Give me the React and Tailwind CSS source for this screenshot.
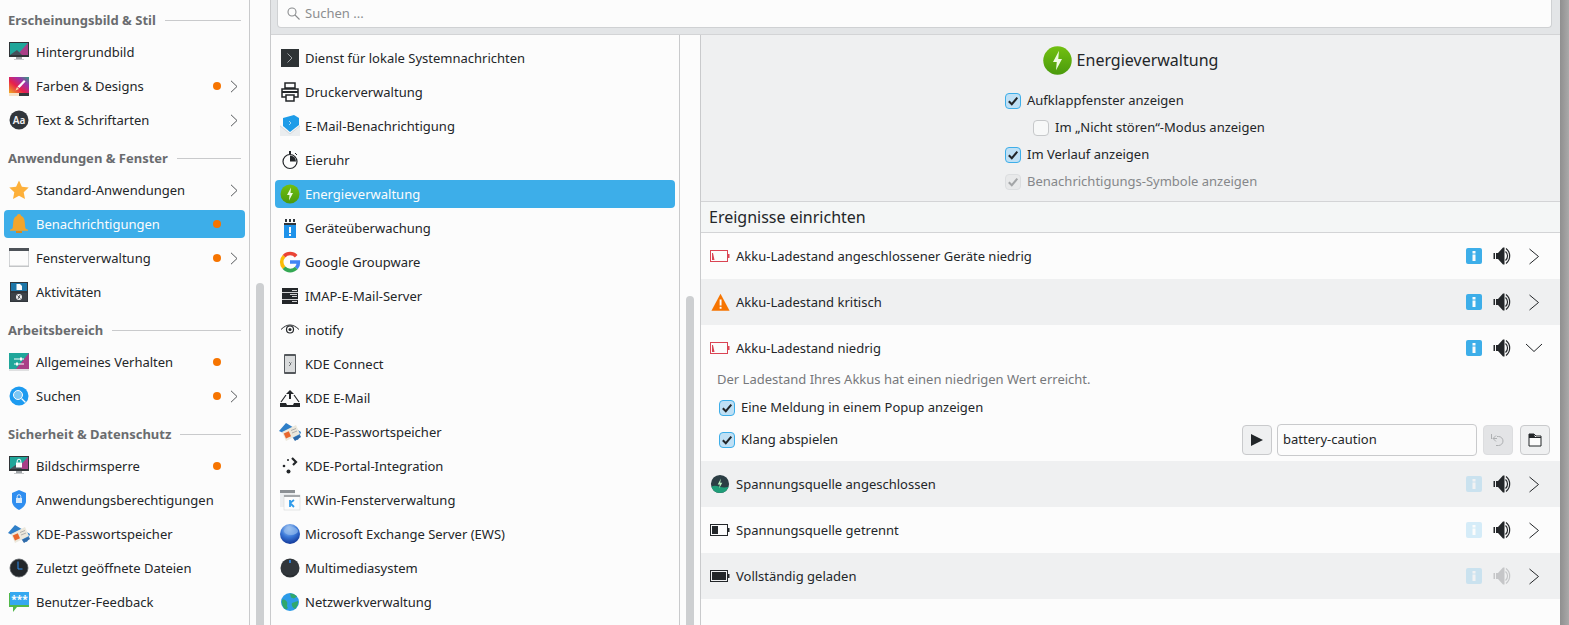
const Svg = ({ size = 22, children, className = '' }) => (
  <svg width={size} height={size} viewBox="0 0 22 22" className={`shrink-0 ${className}`}>
    {children}
  </svg>
)

/* ---------- sidebar icons ---------- */
const MonitorBase = ({ children }) => (
  <Svg>
    <rect x="1" y="1" width="20" height="15" fill="#2f3437" />
    <path d="M2 2h18v12H2z" fill="#1fa69a" />
    <path d="M20 2v12H9z" fill="#a93f87" />
    <path d="M2 14l7-5 5 5z" fill="#45505a" />
    {children}
    <rect x="8" y="16" width="6" height="2" fill="#9fa3a6" />
    <rect x="6" y="18" width="10" height="1" fill="#c8cacc" />
  </Svg>
)
const Wallpaper = () => <MonitorBase />
const Colors = () => (
  <Svg>
    <defs>
      <linearGradient id="cg" x1="0" y1="1" x2="1" y2="0">
        <stop offset="0" stopColor="#f0b020" />
        <stop offset="0.4" stopColor="#e8204a" />
        <stop offset="0.7" stopColor="#a030a8" />
        <stop offset="1" stopColor="#30a080" />
      </linearGradient>
    </defs>
    <rect x="1" y="2" width="20" height="16" fill="url(#cg)" />
    <rect x="1" y="18" width="10" height="3" fill="#f7e3c8" />
    <rect x="11" y="18" width="10" height="3" fill="#33393d" />
    <path d="M16 5l1.500 1.500-6 6.500-2-1.500z" fill="#fcfcfc" />
    <path d="M9 12l2 2-3.500 1.500z" fill="#f4d6a0" />
  </Svg>
)
const TextIcon = () => (
  <Svg>
    <circle cx="11" cy="11" r="9.500" fill="#31363b" />
    <text x="11" y="14.500" textAnchor="middle" fontSize="10" fontWeight="600" fill="#eff0f1" fontFamily="Noto Sans, sans-serif">Aa</text>
  </Svg>
)
const Star = () => (
  <Svg>
    <path d="M11 1.500l2.900 6.300 6.800.8-5 4.700 1.300 6.800L11 16.700l-6 3.400 1.300-6.800-5-4.700 6.800-.8z" fill="#fdb03a" />
  </Svg>
)
const Bell = () => (
  <Svg>
    <path d="M11 1c1.200 0 2 .8 2 1.800 2.500.9 3.500 3 3.700 6l.6 6c.3 1 1.200 1.500 2.700 2v1H2v-1c1.500-.5 2.400-1 2.700-2l.6-6c.2-3 1.200-5.100 3.700-6C9 1.800 9.800 1 11 1z" fill="#f2a52c" />
    <rect x="8" y="18" width="6" height="2" fill="#d98a1c" />
  </Svg>
)
const WindowIcon = () => (
  <Svg>
    <rect x="1.500" y="1.500" width="19" height="18" fill="#fcfcfc" stroke="#d2d4d6" strokeWidth="1" />
    <rect x="1" y="1" width="20" height="3" fill="#4d5258" />
    <rect x="1" y="18.500" width="20" height="1.500" fill="#c3c5c7" />
  </Svg>
)
const Activities = () => (
  <Svg>
    <rect x="2" y="1" width="18" height="20" fill="#31363b" />
    <rect x="3" y="2" width="16" height="8" fill="#1d76a8" />
    <path d="M8.500 3h3.500l2 2v4H8.500z" fill="#fcfcfc" />
    <rect x="3" y="12" width="16" height="8" fill="#3c4248" />
    <circle cx="11" cy="16" r="3" fill="#eff0f1" />
    <path d="M9.500 14.500l3 3M12 14l-2 4" stroke="#31363b" strokeWidth="0.800" />
  </Svg>
)
const General = () => (
  <Svg>
    <rect x="1" y="2" width="20" height="16" fill="#1fa69a" />
    <path d="M21 2v16H8z" fill="#a93f87" />
    <rect x="1" y="18" width="20" height="2" fill="#dfe0e1" />
    <path d="M6 8h10M6 13h10" stroke="#fcfcfc" strokeWidth="1" />
    <rect x="12" y="6.500" width="2" height="3" fill="#fcfcfc" />
    <rect x="8" y="11.500" width="2" height="3" fill="#fcfcfc" />
  </Svg>
)
const SearchBlue = () => (
  <Svg>
    <circle cx="11" cy="11" r="9.500" fill="#1d9bf0" />
    <circle cx="10" cy="10" r="4.500" fill="#7cc7f5" stroke="#fcfcfc" strokeWidth="1" />
    <path d="M13.500 13.500l4 4" stroke="#fcfcfc" strokeWidth="1.300" />
  </Svg>
)
const LockMonitor = () => (
  <MonitorBase>
    <rect x="8" y="7.500" width="6" height="5" fill="#fcfcfc" />
    <path d="M9.200 7.500V6a1.800 1.800 0 013.600 0v1.500" fill="none" stroke="#fcfcfc" strokeWidth="1" />
  </MonitorBase>
)
const Shield = () => (
  <Svg>
    <path d="M11 1l7 3v8c0 4-3 7-7 9-4-2-7-5-7-9V4z" fill="#2f8ef0" />
    <rect x="8" y="9" width="6" height="5" fill="#d6e9fb" />
    <path d="M9.200 9V7.500a1.800 1.800 0 013.600 0V9" fill="none" stroke="#d6e9fb" strokeWidth="1" />
  </Svg>
)
const Wallet = () => (
  <Svg>
    <path d="M0 10L7 2l15 9-3 8z" fill="#2f7fc8" />
    <path d="M3 11l14-7 4 9-14 7z" fill="#ece8dc" />
    <rect x="5.500" y="11" width="5.500" height="5.500" fill="#e8672c" transform="rotate(-24 8.500 13.500)" />
    <path d="M12 9.500l5-2M13 12l5-2" stroke="#a0a0a0" strokeWidth="0.800" />
    <path d="M16 20l6-4-1-2-7 3z" fill="#2f6aa8" />
  </Svg>
)
const ClockIcon = () => (
  <Svg>
    <circle cx="11" cy="11" r="9" fill="#23272b" stroke="#5d6266" strokeWidth="0.800" />
    <path d="M10 4.500v7.500h4.500" fill="none" stroke="#2f8ef0" strokeWidth="1" />
  </Svg>
)
const Feedback = () => (
  <Svg>
    <path d="M1 2h20v14H9l-4 5v-5H1z" fill="#53b84a" />
    <rect x="2" y="1" width="19" height="13" fill="#35a8f0" />
    <text x="11.500" y="12" textAnchor="middle" fontSize="10" fontWeight="700" fill="#fcfcfc" fontFamily="Noto Sans, sans-serif">***</text>
  </Svg>
)

/* ---------- list icons ---------- */
const Terminal = () => (
  <Svg>
    <rect x="2" y="2" width="18" height="18" fill="#2e3335" />
    <path d="M8.500 6.500l4.500 4.500-4.500 4.500" fill="none" stroke="#9fa3a6" strokeWidth="1" />
  </Svg>
)
const Printer = () => (
  <Svg>
    <path d="M6 2h10v5H6zM3 8h16v8H3z" fill="none" stroke="#232629" strokeWidth="1.500" />
    <rect x="3" y="10" width="16" height="2" fill="#232629" />
    <rect x="7" y="14" width="8" height="6" fill="#fcfcfc" stroke="#232629" strokeWidth="1.500" />
  </Svg>
)
const MailNotify = () => (
  <Svg>
    <path d="M1 10l10 8 10-8v11H1z" fill="#eaedef" />
    <path d="M4 3l11-3 5 3v7l-9 7-7-6z" fill="#1e9ce8" />
    <path d="M1 11l10 8 10-8" fill="none" stroke="#d8dbdd" strokeWidth="1" />
    <path d="M10 6l2 2-2 2" fill="none" stroke="#9bd6f8" strokeWidth="1" />
  </Svg>
)
const Timer = () => (
  <Svg>
    <circle cx="11" cy="12.500" r="7" fill="#fcfcfc" stroke="#232629" strokeWidth="1.200" />
    <path d="M11 12.500V6.500a6 6 0 016 6z" fill="#232629" />
    <rect x="10" y="2" width="2" height="3" fill="#232629" />
    <path d="M16 4l2 2" stroke="#232629" strokeWidth="1" />
  </Svg>
)
const Power = ({ size = 22 }) => (
  <Svg size={size}>
    <defs>
      <linearGradient id="pg" x1="0" y1="0" x2="0" y2="1">
        <stop offset="0" stopColor="#72c011" />
        <stop offset="1" stopColor="#4a9a0c" />
      </linearGradient>
    </defs>
    <circle cx="11" cy="11" r="9.500" fill="url(#pg)" />
    <path d="M12 4.500L8 12h2.500L10 17.500l4-7.500h-2.500z" fill="#eefbe0" />
  </Svg>
)
const Usb = () => (
  <Svg>
    <rect x="6" y="2" width="2" height="3" fill="#31363b" />
    <rect x="10" y="2" width="2" height="3" fill="#31363b" />
    <rect x="14" y="2" width="2" height="3" fill="#31363b" />
    <rect x="5" y="6" width="12" height="2" fill="#31363b" />
    <rect x="5" y="8" width="12" height="13" fill="#1e92ea" />
    <rect x="10" y="10" width="2" height="6" fill="#fcfcfc" />
    <rect x="10" y="17" width="2" height="2" fill="#fcfcfc" />
  </Svg>
)
const Google = () => (
  <Svg>
    <g fill="none" strokeWidth="3.600">
      <path d="M17.200 5.200A8.400 8.400 0 005 5.200" stroke="#ea4335" />
      <path d="M5 5.200a8.400 8.400 0 000 11.600" stroke="#fbbc05" />
      <path d="M5 16.800a8.400 8.400 0 0012.300.2" stroke="#34a853" />
      <path d="M17.300 17a8.400 8.400 0 002.100-6H11" stroke="#4285f4" />
    </g>
  </Svg>
)
const Server = () => (
  <Svg>
    <rect x="3" y="3" width="16" height="16" fill="#232629" />
    <path d="M3 7.500h16M3 14.500h16" stroke="#fcfcfc" strokeWidth="0.800" />
    <path d="M13 5.500h5M11 9.500h7M13 11.500h5M13 16.500h5" stroke="#fcfcfc" strokeWidth="0.800" />
  </Svg>
)
const Eye = () => (
  <Svg>
    <path d="M2 10.500c3-3 6-4.500 9-4.500s6 1.500 9 4.500" fill="none" stroke="#232629" strokeWidth="1" />
    <circle cx="11" cy="10.500" r="3.500" fill="none" stroke="#232629" strokeWidth="1.200" />
    <circle cx="11" cy="10.500" r="1.500" fill="#232629" />
  </Svg>
)
const Phone = () => (
  <Svg>
    <rect x="5" y="1" width="12" height="20" rx="1" fill="#55595d" />
    <rect x="6" y="3" width="10" height="16" fill="#d9dbdc" />
    <path d="M10 9l2 2-2 2M12.500 9.500l-1 1" fill="none" stroke="#55595d" strokeWidth="0.800" />
  </Svg>
)
const Inbox = () => (
  <Svg>
    <path d="M2 15l5-7M20 15l-5-7" fill="none" stroke="#232629" strokeWidth="1.200" />
    <path d="M1 16h6l1 2h6l1-2h6v4H1z" fill="#232629" />
    <path d="M11 3l4 4h-3v5h-2V7H7z" fill="#232629" />
  </Svg>
)
const Dots = () => (
  <Svg>
    <path d="M13 3l4 4-3 3" fill="none" stroke="#232629" strokeWidth="2.200" />
    <circle cx="9" cy="5" r="1" fill="#232629" />
    <circle cx="5" cy="11" r="1.300" fill="#232629" />
    <circle cx="9.500" cy="16.500" r="2" fill="#232629" />
  </Svg>
)
const KWin = () => (
  <Svg>
    <rect x="1" y="1" width="15" height="3" fill="#8c9094" />
    <rect x="1" y="4" width="15" height="14" fill="#eceef0" />
    <rect x="5" y="6" width="16" height="15" fill="#fcfcfc" stroke="#d4d6d8" strokeWidth="0.600" />
    <rect x="5" y="6" width="16" height="2" fill="#a5a8ab" />
    <path d="M11 11v7M11 14l4-3M11 14l4 4" fill="none" stroke="#2f9bea" strokeWidth="1.800" />
  </Svg>
)
const Exchange = () => (
  <Svg>
    <defs>
      <radialGradient id="eg" cx="0.450" cy="0.250" r="0.800">
        <stop offset="0" stopColor="#bcd8f6" />
        <stop offset="0.500" stopColor="#3a78d8" />
        <stop offset="1" stopColor="#0d2f90" />
      </radialGradient>
    </defs>
    <circle cx="11" cy="11" r="10" fill="url(#eg)" />
    <ellipse cx="12" cy="8" rx="7" ry="4" fill="#8fb8ec" opacity="0.700" />
  </Svg>
)
const Dial = () => (
  <Svg>
    <circle cx="11" cy="11" r="9.500" fill="#31363b" />
    <rect x="10.200" y="3" width="1.600" height="3" fill="#2f8ef0" />
    <path d="M4 16a9 9 0 0014 0 9.500 9.500 0 01-14 0z" fill="#1d2023" />
  </Svg>
)
const Earth = () => (
  <Svg>
    <circle cx="11" cy="11" r="9" fill="#2c9be8" />
    <path d="M3 9c2-1 4 0 5 2s-1 4 1 6l-2 1.500C4 17 2.500 13 3 9zM11 2.500c3 0 5 1 7 3l-3 2-3-1zM13 12l6-2c.5 3-1 6-3 8-2-1-4-4-3-6z" fill="#2fa86c" />
  </Svg>
)

/* ---------- notification row icons ---------- */
const Battery = ({ color = '#232629', fill = 0, low = false }) => (
  <svg width="20" height="12" viewBox="0 0 20 12" className="shrink-0">
    <rect x="0.500" y="0.500" width="17" height="11" fill="none" stroke={color} />
    <rect x="18" y="4" width="1.500" height="4" fill={color} />
    {fill > 0 && <rect x="2" y="2" width={fill} height="8" fill={color} />}
    {low && <path d="M2 10V3h1l1.500 7z" fill={color} />}
  </svg>
)
const Warning = () => (
  <Svg size={19}>
    <path d="M11 1l10.500 19.500H.500z" fill="#f67400" />
    <rect x="10" y="7.500" width="2.200" height="7" fill="#fcfcfc" />
    <rect x="10" y="16" width="2.200" height="2.200" fill="#fcfcfc" />
  </Svg>
)
const Plugged = () => (
  <Svg size={20}>
    <circle cx="11" cy="11" r="10" fill="#2b3e44" />
    <path d="M1.500 14c3-2 6-1 9 0s7 1 10 0a10 10 0 01-19 0z" fill="#1f9d78" />
    <path d="M12 5l-3.500 6.500h2.300L10 16l3.500-6.500h-2.300z" fill="#b8f0c0" />
  </Svg>
)
const Info = ({ faded }) => (
  <div className={`flex h-4 w-4 items-center justify-center rounded-[2px] bg-[#3daee9] ${faded}`}>
    <svg width="4" height="10" viewBox="0 0 4 10">
      <rect x="0.500" y="0" width="3" height="2.500" fill="#fcfcfc" />
      <rect x="0.500" y="3.500" width="3" height="6.500" fill="#fcfcfc" />
    </svg>
  </div>
)
const Speaker = ({ faded = '' }) => (
  <svg width="18" height="18" viewBox="0 0 18 18" className={faded}>
    <rect x="0.500" y="6" width="1.500" height="6" fill="#232629" />
    <path d="M3 6h2l5-5.500h1.500v17H10l-5-5.500H3z" fill="#232629" />
    <path d="M12.500 4.500a6 6 0 010 9M13 1.500a9.500 9.500 0 010 15" fill="none" stroke="#232629" strokeWidth="1.200" />
  </svg>
)
const RowChevron = () => (
  <svg width="12" height="17" viewBox="0 0 12 17">
    <path d="M1.500 1l9 7.500-9 7.500" fill="none" stroke="#232629" />
  </svg>
)
const SideChevron = () => (
  <svg width="8" height="13" viewBox="0 0 8 13">
    <path d="M1 .8l6 5.700-6 5.700" fill="none" stroke="#55585b" />
  </svg>
)
const Check = ({ color = '#232629' }) => (
  <svg width="12" height="12" viewBox="0 0 12 12">
    <path d="M1.800 6.200l3 3 5.500-6.500" fill="none" stroke={color} strokeWidth="2" />
  </svg>
)
const CheckBox = ({ state = 'on' }) => {
  if (state === 'off') return <span className="h-4 w-4 shrink-0 rounded-[4px] border border-[#c6c8ca] bg-[#f7f8f8]" />
  if (state === 'dim')
    return (
      <span className="flex h-4 w-4 shrink-0 items-center justify-center rounded-[4px] border border-[#dcdee0] bg-[#e8e9ea]">
        <Check color="#a3a5a7" />
      </span>
    )
  return (
    <span className="flex h-4 w-4 shrink-0 items-center justify-center rounded-[4px] border border-[#3daee9] bg-[#bfe0f5]">
      <Check />
    </span>
  )
}

const groups = [
  {
    title: 'Erscheinungsbild & Stil',
    items: [
      { icon: Wallpaper, label: 'Hintergrundbild' },
      { icon: Colors, label: 'Farben & Designs', dot: true, more: true },
      { icon: TextIcon, label: 'Text & Schriftarten', more: true },
    ],
  },
  {
    title: 'Anwendungen & Fenster',
    items: [
      { icon: Star, label: 'Standard-Anwendungen', more: true },
      { icon: Bell, label: 'Benachrichtigungen', dot: true, active: true },
      { icon: WindowIcon, label: 'Fensterverwaltung', dot: true, more: true },
      { icon: Activities, label: 'Aktivitäten' },
    ],
  },
  {
    title: 'Arbeitsbereich',
    items: [
      { icon: General, label: 'Allgemeines Verhalten', dot: true },
      { icon: SearchBlue, label: 'Suchen', dot: true, more: true },
    ],
  },
  {
    title: 'Sicherheit & Datenschutz',
    items: [
      { icon: LockMonitor, label: 'Bildschirmsperre', dot: true },
      { icon: Shield, label: 'Anwendungsberechtigungen' },
      { icon: Wallet, label: 'KDE-Passwortspeicher' },
      { icon: ClockIcon, label: 'Zuletzt geöffnete Dateien' },
      { icon: Feedback, label: 'Benutzer-Feedback' },
    ],
  },
]

const apps = [
  { icon: Terminal, label: 'Dienst für lokale Systemnachrichten' },
  { icon: Printer, label: 'Druckerverwaltung' },
  { icon: MailNotify, label: 'E-Mail-Benachrichtigung' },
  { icon: Timer, label: 'Eieruhr' },
  { icon: Power, label: 'Energieverwaltung', active: true },
  { icon: Usb, label: 'Geräteüberwachung' },
  { icon: Google, label: 'Google Groupware' },
  { icon: Server, label: 'IMAP-E-Mail-Server' },
  { icon: Eye, label: 'inotify' },
  { icon: Phone, label: 'KDE Connect' },
  { icon: Inbox, label: 'KDE E-Mail' },
  { icon: Wallet, label: 'KDE-Passwortspeicher' },
  { icon: Dots, label: 'KDE-Portal-Integration' },
  { icon: KWin, label: 'KWin-Fensterverwaltung' },
  { icon: Exchange, label: 'Microsoft Exchange Server (EWS)' },
  { icon: Dial, label: 'Multimediasystem' },
  { icon: Earth, label: 'Netzwerkverwaltung' },
]

const EventHead = ({ icon, label, info = '', sound = '', open }) => (
  <div className="flex h-[46px] items-center pl-[8px] pr-[17px]">
    <span className="flex w-[22px] justify-center">{icon}</span>
    <span className="ml-[5px] flex-1 pt-[2px]">{label}</span>
    <Info faded={info} />
    <span className="ml-[11px] flex w-[18px] justify-center">
      <Speaker faded={sound} />
    </span>
    <span className="ml-[14px] flex w-[18px] justify-center">
      {open ? (
        <svg width="18" height="10" viewBox="0 0 18 10">
          <path d="M1 1l8 7.500L17 1" fill="none" stroke="#232629" />
        </svg>
      ) : (
        <RowChevron />
      )}
    </span>
  </div>
)

const App = () => {
  return (
    <div className="flex h-[625px] w-full overflow-hidden bg-[#fcfcfc] font-['Noto_Sans',sans-serif] text-[13px] text-[#232629]">
      {/* Category sidebar */}
      <aside className="-mt-px w-[250px] shrink-0 border-r border-[#c9cacc] pl-1 pr-[4px]">
        {groups.map((group) => (
          <div key={group.title}>
            <div className="flex h-9 items-center gap-[9px] pt-1.5 pl-1 pr-1">
              <span className="pt-[2px] font-bold text-[#6a6c6f]">{group.title}</span>
              <span className="h-px flex-1 bg-[#c9cacc]" />
            </div>
            {group.items.map((item) => (
              <div key={item.label} className="py-[3px]">
                <div
                  className={`flex h-7 items-center rounded-[4px] pl-1 ${
                    item.active ? 'bg-[#3daee9] text-[#fcfcfc]' : ''
                  }`}
                >
                  <item.icon />
                  <span className="ml-1.5 flex-1 pt-[2px]">{item.label}</span>
                  {item.dot && <span className="h-2 w-2 rounded-full bg-[#f67400]" />}
                  <span className="ml-[9px] mr-[7px] flex w-2 justify-center">{item.more && <SideChevron />}</span>
                </div>
              </div>
            ))}
          </div>
        ))}
      </aside>

      {/* Sidebar scroll gutter */}
      <div className="w-[21px] shrink-0 border-r border-[#c9cacc] pl-1.5 pt-[283px]">
        <div className="h-full w-2 rounded-t-full bg-[#cdcfd1]" />
      </div>

      <div className="flex min-w-0 flex-1 flex-col">
        {/* Search strip */}
        <div className="h-[35px] shrink-0 border-b border-[#d3d4d6] bg-[#e3e5e7] pl-1.5 pr-2">
          <div className="flex h-7 items-center rounded-b-[4px] border border-t-0 border-[#cfd1d3] bg-[#fcfcfc] pl-[9px]">
            <svg width="13" height="13" viewBox="0 0 13 13">
              <circle cx="5" cy="5" r="4" fill="none" stroke="#8a8c8e" strokeWidth="1.100" />
              <path d="M8 8l4.500 4.500" stroke="#8a8c8e" strokeWidth="1.100" />
            </svg>
            <span className="ml-[5px] text-[#8c8e90]">Suchen ...</span>
          </div>
        </div>

        <div className="flex min-h-0 flex-1">
          {/* Notification sources */}
          <div className="w-[409px] shrink-0 border-r border-[#c9cacc] px-1 pt-[6px]">
            {apps.map((app) => (
              <div key={app.label} className="py-[3px]">
                <div
                  className={`flex h-7 items-center rounded-[4px] pl-1 ${
                    app.active ? 'bg-[#3daee9] text-[#fcfcfc]' : ''
                  }`}
                >
                  <app.icon />
                  <span className="ml-1 pt-[2px]">{app.label}</span>
                </div>
              </div>
            ))}
          </div>

          {/* List scroll gutter */}
          <div className="w-[21px] shrink-0 border-r border-[#c9cacc] pl-1.5 pt-[261px]">
            <div className="h-full w-2 rounded-t-full bg-[#cdcfd1]" />
          </div>

          {/* Detail panel */}
          <div className="flex min-w-0 flex-1 flex-col">
            <div className="flex h-[167px] shrink-0 flex-col items-center border-b border-[#d3d4d6] bg-[#eff0f1] pt-[10px]">
              <div className="flex h-[30px] items-center">
                <Power size={33} />
                <span className="ml-[3px] mr-[2px] text-[16px]">Energieverwaltung</span>
              </div>
              <div className="ml-[8px] mt-[12px] w-[259px] whitespace-nowrap">
                <label className="flex h-[27px] items-center gap-[6px]">
                  <CheckBox />
                  Aufklappfenster anzeigen
                </label>
                <label className="flex h-[27px] items-center gap-[6px] pl-7">
                  <CheckBox state="off" />
                  Im „Nicht stören“-Modus anzeigen
                </label>
                <label className="flex h-[27px] items-center gap-[6px]">
                  <CheckBox />
                  Im Verlauf anzeigen
                </label>
                <label className="flex h-[27px] items-center gap-[6px] text-[#85878a]">
                  <CheckBox state="dim" />
                  Benachrichtigungs-Symbole anzeigen
                </label>
              </div>
            </div>

            <div className="flex h-[31px] shrink-0 items-center border-b border-[#d3d4d6] bg-[#f4f6f6] pl-2 text-[16px]">
              Ereignisse einrichten
            </div>

            <EventHead icon={<Battery color="#da4453" low />} label="Akku-Ladestand angeschlossener Geräte niedrig" />
            <div className="bg-[#eff0f1]">
              <EventHead icon={<Warning />} label="Akku-Ladestand kritisch" />
            </div>

            <div className="h-[136px] shrink-0">
              <EventHead icon={<Battery color="#da4453" low />} label="Akku-Ladestand niedrig" open />
              <p className="-mt-px pl-4 leading-[18px] text-[#76787b]">Der Ladestand Ihres Akkus hat einen niedrigen Wert erreicht.</p>
              <label className="mt-[4px] flex h-8 items-center gap-[6px] pl-[18px]">
                <CheckBox />
                Eine Meldung in einem Popup anzeigen
              </label>
              <div className="flex h-8 items-center pl-[18px] pr-[10px]">
                <label className="flex flex-1 items-center gap-[6px]">
                  <CheckBox />
                  Klang abspielen
                </label>
                <button className="flex h-[30px] w-[30px] items-center justify-center rounded-[4px] border border-[#c9cacc] bg-[#eff0f1]">
                  <svg width="12" height="12" viewBox="0 0 12 12">
                    <path d="M0 0l12 6-12 6z" fill="#232629" />
                  </svg>
                </button>
                <div className="ml-[5px] flex h-8 w-[200px] items-center rounded-[4px] border border-[#c9cacc] bg-[#fcfcfc] pl-[5px]">
                  battery-caution
                </div>
                <button className="ml-[6px] flex h-[30px] w-[30px] items-center justify-center rounded-[4px] border border-[#dcdddf] bg-[#e3e4e6]">
                  <svg width="16" height="16" viewBox="0 0 16 16">
                    <path d="M1.500 2v5M3 6.500h4M3 6.500l3-3M3 6.500l3 3M7 4.500h1.500a4.500 4.500 0 010 9H6" fill="none" stroke="#aeb0b2" />
                  </svg>
                </button>
                <button className="ml-[7px] flex h-[30px] w-[30px] items-center justify-center rounded-[4px] border border-[#c9cacc] bg-[#eff0f1]">
                  <svg width="14" height="14" viewBox="0 0 14 14">
                    <path d="M1 1h5l2 2h5v10H1z" fill="#fcfcfc" stroke="#232629" />
                    <path d="M1 1h5l1 3h6v1H1z" fill="#232629" />
                  </svg>
                </button>
              </div>
            </div>

            <div className="bg-[#eff0f1]">
              <EventHead icon={<Plugged />} label="Spannungsquelle angeschlossen" info="opacity-20" />
            </div>
            <EventHead icon={<Battery fill={6} />} label="Spannungsquelle getrennt" info="opacity-20" />
            <div className="bg-[#eff0f1]">
              <EventHead icon={<Battery fill={14} />} label="Vollständig geladen" info="opacity-20" sound="opacity-20" />
            </div>
          </div>
        </div>
      </div>

      {/* Neighbouring window shadow */}
      <div className="w-[9px] shrink-0 bg-linear-to-r from-[#8f8f8f] to-[#a9a9a9]" />
    </div>
  )
}

export default App
